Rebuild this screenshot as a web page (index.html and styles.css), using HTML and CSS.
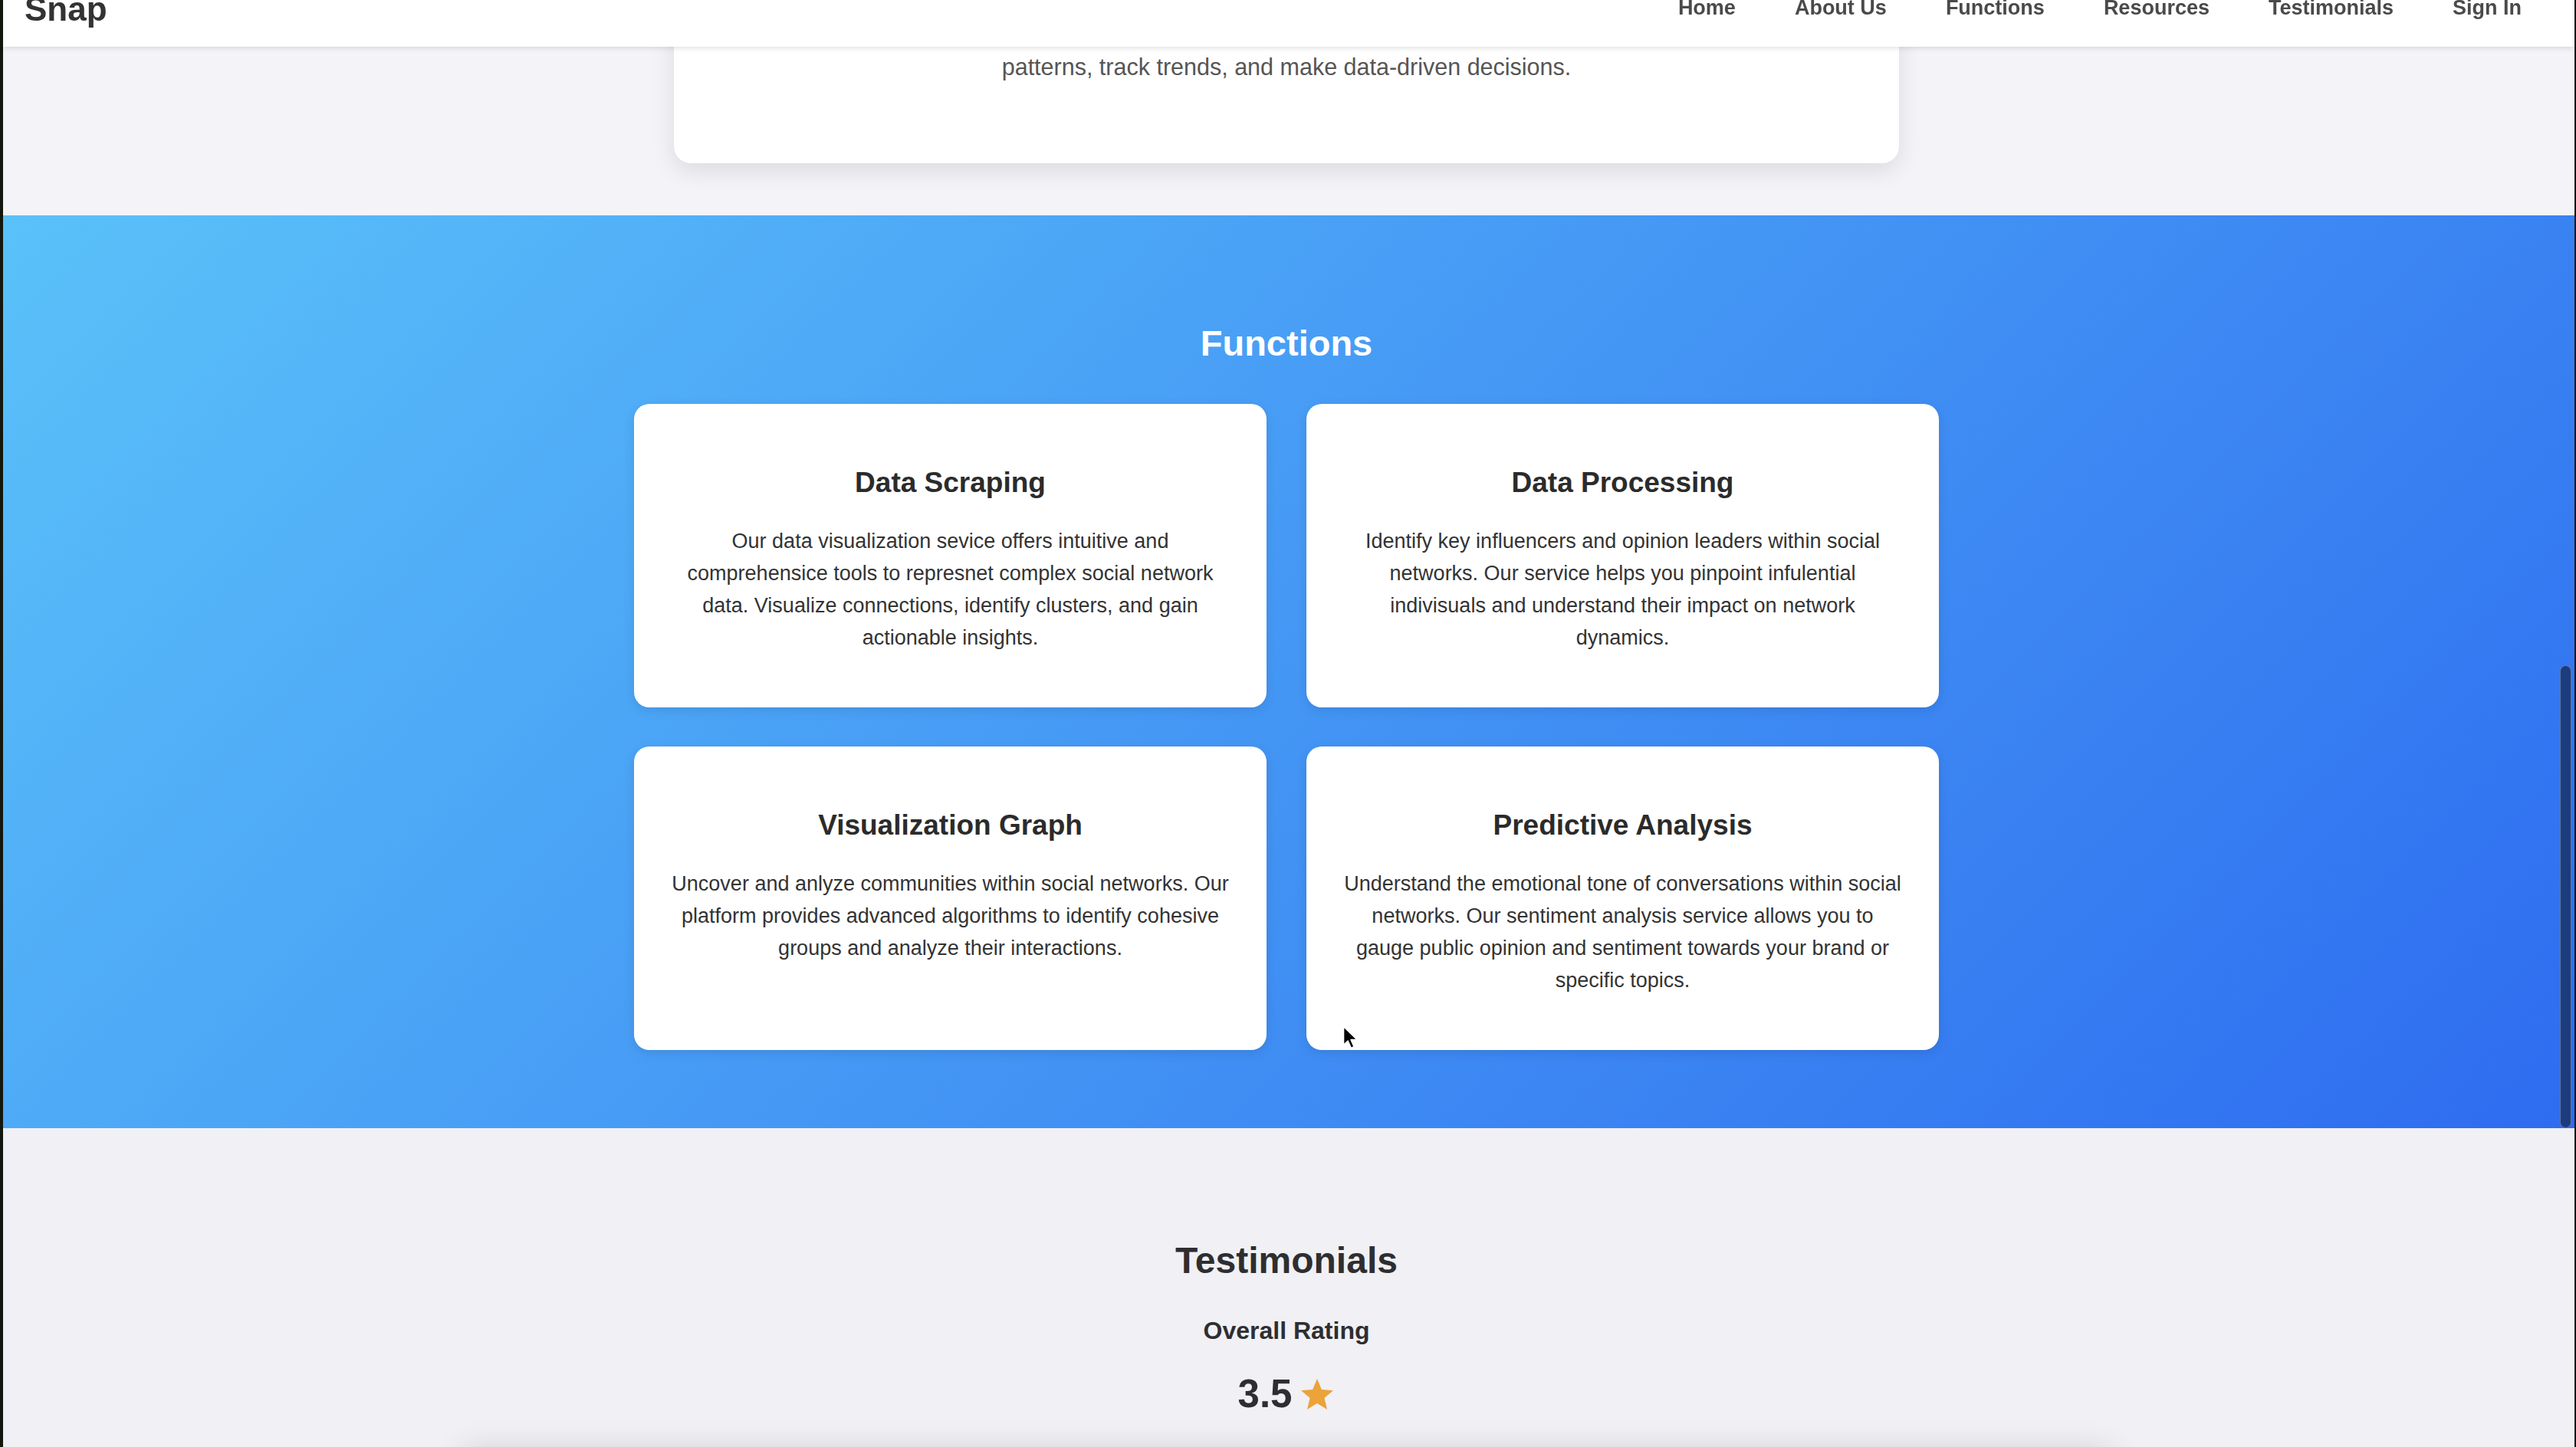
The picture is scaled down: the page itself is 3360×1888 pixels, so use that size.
FILE: index.html
```html
<!DOCTYPE html>
<html lang="en">
<head>
<meta charset="utf-8">
<title>Snap</title>
<link rel="stylesheet" href="styles.css">
</head>
<body>
<header class="nav">
  <div class="logo">Snap</div>
  <nav class="links">
    <a href="#">Home</a>
    <a href="#">About Us</a>
    <a href="#">Functions</a>
    <a href="#">Resources</a>
    <a href="#">Testimonials</a>
    <a href="#">Sign In</a>
  </nav>
</header>

<main>
  <section class="about">
    <div class="about-card">
      <p>Our platform gives you the insight you need to uncover hidden<br>patterns, track trends, and make data-driven decisions.</p>
    </div>
  </section>

  <section class="functions">
    <h2 class="functions-title">Functions</h2>
    <div class="grid">
      <article class="card">
        <h3>Data Scraping</h3>
        <p>Our data visualization sevice offers intuitive and comprehensice tools to represnet complex social network data. Visualize connections, identify clusters, and gain actionable insights.</p>
      </article>
      <article class="card">
        <h3>Data Processing</h3>
        <p>Identify key influencers and opinion leaders within social networks. Our service helps you pinpoint infulential indivisuals and understand their impact on network dynamics.</p>
      </article>
      <article class="card">
        <h3>Visualization Graph</h3>
        <p>Uncover and anlyze communities within social networks. Our platform provides advanced algorithms to identify cohesive groups and analyze their interactions.</p>
      </article>
      <article class="card">
        <h3>Predictive Analysis</h3>
        <p>Understand the emotional tone of conversations within social networks. Our sentiment analysis service allows you to gauge public opinion and sentiment towards your brand or specific topics.</p>
      </article>
    </div>
  </section>

  <section class="testimonials">
    <h2 class="testimonials-title">Testimonials</h2>
    <div class="rating-label">Overall Rating</div>
    <div class="rating">
      <span class="rating-value">3.5</span>
      <svg class="star" viewBox="0 0 24 24" aria-hidden="true"><path d="M12 1.6l3.05 7.3 7.9.62-6.02 5.15 1.85 7.7L12 18.25l-6.78 4.12 1.85-7.7L1.05 9.52l7.9-.62z"/></svg>
    </div>
    <div class="review-card"></div>
  </section>
</main>

<div class="scroll-thumb"></div>
<svg class="cursor" viewBox="0 0 20 32" aria-hidden="true"><path d="M1.5 1.5v24l5.6-5.4 4.2 9.4 3.9-1.7-4.1-9.2 7.9-.3z" fill="#000" stroke="#fff" stroke-width="1.6" stroke-linejoin="round"/></svg>
</body>
</html>
```

FILE: styles.css
```css
html {
  background: #13180f;
  overflow: hidden;
}

body {
  margin: 0 2px 0 4px;
  background: #f3f3f8;
  font-family: "Liberation Sans", Arial, Helvetica, sans-serif;
  color: #333;
  min-height: 1888px;
}

.nav {
  position: fixed;
  top: 0;
  left: 4px;
  right: 2px;
  height: 61px;
  background: #fff;
  box-shadow: 0 2px 6px rgba(0, 0, 0, 0.12);
  display: flex;
  justify-content: space-between;
  align-items: flex-start;
  padding: 0 69px 0 28px;
  z-index: 10;
  box-sizing: border-box;
}

.logo {
  font-size: 44px;
  font-weight: 700;
  line-height: 24px;
  color: #333;
}

.links {
  display: flex;
  gap: 77px;
}

.links a {
  font-size: 27px;
  font-weight: 700;
  line-height: 21px;
  color: #4a4a4a;
  text-decoration: none;
}

.about {
  padding: 0 6px 68px 0;
  display: flex;
  justify-content: center;
}

.about-card {
  width: 1598px;
  background: #fff;
  border-radius: 0 0 22px 22px;
  box-shadow: 0 10px 30px rgba(0, 0, 0, 0.1);
  padding: 18px 0 103px;
  box-sizing: border-box;
}

.about-card p {
  margin: 0;
  text-align: center;
  font-size: 30.5px;
  line-height: 46px;
  color: #555;
}

.functions {
  background: linear-gradient(135deg, #5ac1f9 0%, #2e6cf0 100%);
  padding: 140px 6px 102px 0;
}

.functions-title {
  margin: 0 0 52px;
  text-align: center;
  font-size: 47px;
  line-height: 54px;
  font-weight: 700;
  color: #fff;
}

.grid {
  width: 1702px;
  margin: 0 auto;
  display: grid;
  grid-template-columns: 1fr 1fr;
  gap: 51px 52px;
}

.card {
  background: #fff;
  border-radius: 20px;
  box-shadow: 0 4px 14px rgba(0, 0, 0, 0.1);
  padding: 82px 46px 70px;
  text-align: center;
}

.card h3 {
  margin: 0 0 34px;
  font-size: 37px;
  line-height: 42px;
  font-weight: 700;
  color: #2b2b2b;
}

.card p {
  margin: 0;
  font-size: 27px;
  line-height: 42px;
  color: #333;
}

.testimonials {
  background: #f0f0f5;
  padding: 145px 6px 0 0;
  text-align: center;
}

.testimonials-title {
  margin: 0 0 46px;
  font-size: 48px;
  line-height: 55px;
  font-weight: 700;
  color: #2e2e30;
}

.rating-label {
  font-size: 32px;
  line-height: 37px;
  font-weight: 700;
  color: #2e2e30;
  margin-bottom: 34px;
}

.rating {
  display: flex;
  justify-content: center;
  align-items: center;
  gap: 10px;
}

.rating-value {
  font-size: 51px;
  line-height: 59px;
  font-weight: 700;
  color: #2e2e30;
}

.star {
  width: 46px;
  height: 46px;
  fill: #eba33a;
  margin-top: 0;
}

.review-card {
  width: 2160px;
  height: 400px;
  margin: 42px auto 0;
  background: #fff;
  border-radius: 22px;
  box-shadow: 0 0 40px rgba(0, 0, 0, 0.13);
}

.scroll-thumb {
  position: fixed;
  left: 3339px;
  top: 868px;
  width: 15px;
  height: 604px;
  border-radius: 8px;
  background: #1b3c7e;
  border: 1px solid rgba(255, 255, 255, 0.3);
  box-sizing: border-box;
  z-index: 11;
}

.cursor {
  position: fixed;
  left: 1751px;
  top: 1338px;
  width: 20px;
  height: 32px;
  z-index: 12;
}
```
